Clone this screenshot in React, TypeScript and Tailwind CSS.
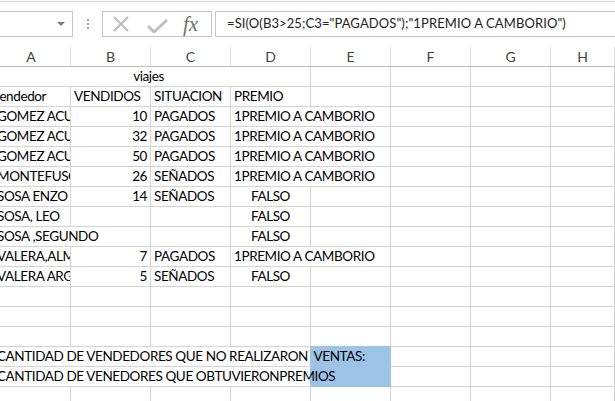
import React from 'react';

const grid = "grid grid-cols-[71px_80px_80px_80px_80px_80px_80px_1fr]";
const cellBase = "h-[20px] border-b border-r border-[#d4d4d4] px-[3px] leading-[19px] whitespace-pre overflow-hidden";

function Cell({ children, className = '' }: { children?: React.ReactNode; className?: string }) {
  return <div className={`${cellBase} ${className}`}>{children}</div>;
}

type Row = { a?: string; b?: string; c?: string; d?: string; prize?: boolean };

const rows: Row[] = [
  { a: 'GOMEZ ACUÑA', b: '10', c: 'PAGADOS', d: '1PREMIO A CAMBORIO', prize: true },
  { a: 'GOMEZ ACUÑA', b: '32', c: 'PAGADOS', d: '1PREMIO A CAMBORIO', prize: true },
  { a: 'GOMEZ ACUÑA', b: '50', c: 'PAGADOS', d: '1PREMIO A CAMBORIO', prize: true },
  { a: 'MONTEFUSCO', b: '26', c: 'SEÑADOS', d: '1PREMIO A CAMBORIO', prize: true },
  { a: 'SOSA ENZO', b: '14', c: 'SEÑADOS', d: 'FALSO' },
  { a: 'SOSA, LEO', d: 'FALSO' },
];

const rows2: Row[] = [
  { a: 'VALERA,ALMADA', b: '7', c: 'PAGADOS', d: '1PREMIO A CAMBORIO', prize: true },
  { a: 'VALERA ARGAÑARAZ', b: '5', c: 'SEÑADOS', d: 'FALSO' },
];

function DataRow({ r }: { r: Row }) {
  return (
    <>
      <Cell><span className="ml-[-6px]">{r.a}</span></Cell>
      <Cell className="text-right">{r.b}</Cell>
      <Cell>{r.c}</Cell>
      {r.prize ? (
        <Cell className="col-span-2">{r.d}</Cell>
      ) : (
        <>
          <Cell className="text-center">{r.d}</Cell>
          <Cell />
        </>
      )}
      <Cell />
      <Cell />
      <Cell />
    </>
  );
}

function EmptyRow() {
  return (
    <>
      <Cell /><Cell /><Cell /><Cell /><Cell /><Cell /><Cell /><Cell />
    </>
  );
}

export default function App() {
  return (
    <div className="w-[615px] h-[401px] overflow-hidden bg-white text-black font-['Lato',sans-serif] text-[13.5px] tracking-[-0.4px]">
      <div className="h-[2px] border-b border-[#d5d5d5]" />

      {/* formula bar */}
      <div className="flex h-[26px] mt-[9px] tracking-normal">
        <div className="w-[74px] -ml-px border border-[#c6c6c6] flex items-center justify-end pr-[7px]">
          <svg width="8" height="4" viewBox="0 0 8 4"><path d="M0 0h8L4 4z" fill="#7a7a7a" /></svg>
        </div>
        <div className="w-[29px] flex flex-col items-center justify-center gap-[2px]">
          <span className="w-[2px] h-[2px] bg-[#a3a3a3]" />
          <span className="w-[2px] h-[2px] bg-[#a3a3a3]" />
          <span className="w-[2px] h-[2px] bg-[#a3a3a3]" />
        </div>
        <div className="w-[110px] border border-[#c6c6c6] flex items-center">
          <svg className="ml-[9px]" width="18" height="18" viewBox="0 0 18 18">
            <path d="M2 2L16 16M16 2L2 16" stroke="#bfbfbf" strokeWidth="2.2" />
          </svg>
          <svg className="ml-[17px] mt-[4px]" width="21" height="14" viewBox="0 0 21 14">
            <path d="M1 7l6 6L20 1" stroke="#bfbfbf" strokeWidth="3" fill="none" />
          </svg>
          <span className="ml-[15px] font-['Liberation_Serif',serif] italic text-[21px] text-[#707070] leading-none">fx</span>
        </div>
        <div className="flex-1 ml-[3px] -mr-px border border-[#c6c6c6] flex items-center pl-[11px] text-[13px] tracking-[0.1px] text-[#222]">
          =SI(O(B3&gt;25;C3="PAGADOS");"1PREMIO A CAMBORIO")
        </div>
      </div>

      {/* column headers */}
      <div className={`${grid} mt-[10px] h-[20px] border-b border-[#bdbdbd] text-[#444] text-[14px] tracking-normal`}>
        {['A', 'B', 'C', 'D', 'E', 'F', 'G', 'H'].map((c, i) => (
          <div key={c} className={`border-r border-[#e1e1e1] leading-[19px] text-center ${i === 0 ? 'pr-[8px]' : ''}`}>{c}</div>
        ))}
      </div>

      {/* sheet */}
      <div className={grid}>
        <Cell className="col-span-4 text-center pr-[16px]">viajes</Cell>
        <Cell /><Cell /><Cell /><Cell />

        <Cell><span className="ml-[-10px]">vendedor</span></Cell>
        <Cell>VENDIDOS</Cell>
        <Cell>SITUACION</Cell>
        <Cell>PREMIO</Cell>
        <Cell /><Cell /><Cell /><Cell />

        {rows.map((r, i) => <DataRow key={i} r={r} />)}

        <Cell className="col-span-2"><span className="ml-[-6px]">SOSA ,SEGUNDO</span></Cell>
        <Cell />
        <Cell className="text-center">FALSO</Cell>
        <Cell /><Cell /><Cell /><Cell />

        {rows2.map((r, i) => <DataRow key={i} r={r} />)}

        <EmptyRow />
        <EmptyRow />
        <EmptyRow />

        <Cell className="col-span-4 overflow-visible z-10 border-r-0"><span className="ml-[-6px]">CANTIDAD DE VENDEDORES QUE NO REALIZARON  VENTAS:</span></Cell>
        <div className="row-span-2 -mt-px -ml-px bg-[#9dc3e6]" />
        <Cell /><Cell /><Cell />
        <Cell className="col-span-4 overflow-visible z-10 border-r-0"><span className="ml-[-6px]">CANTIDAD DE VENEDORES QUE OBTUVIERONPREMIOS</span></Cell>
        <Cell /><Cell /><Cell />

        <EmptyRow />
      </div>
    </div>
  );
}
